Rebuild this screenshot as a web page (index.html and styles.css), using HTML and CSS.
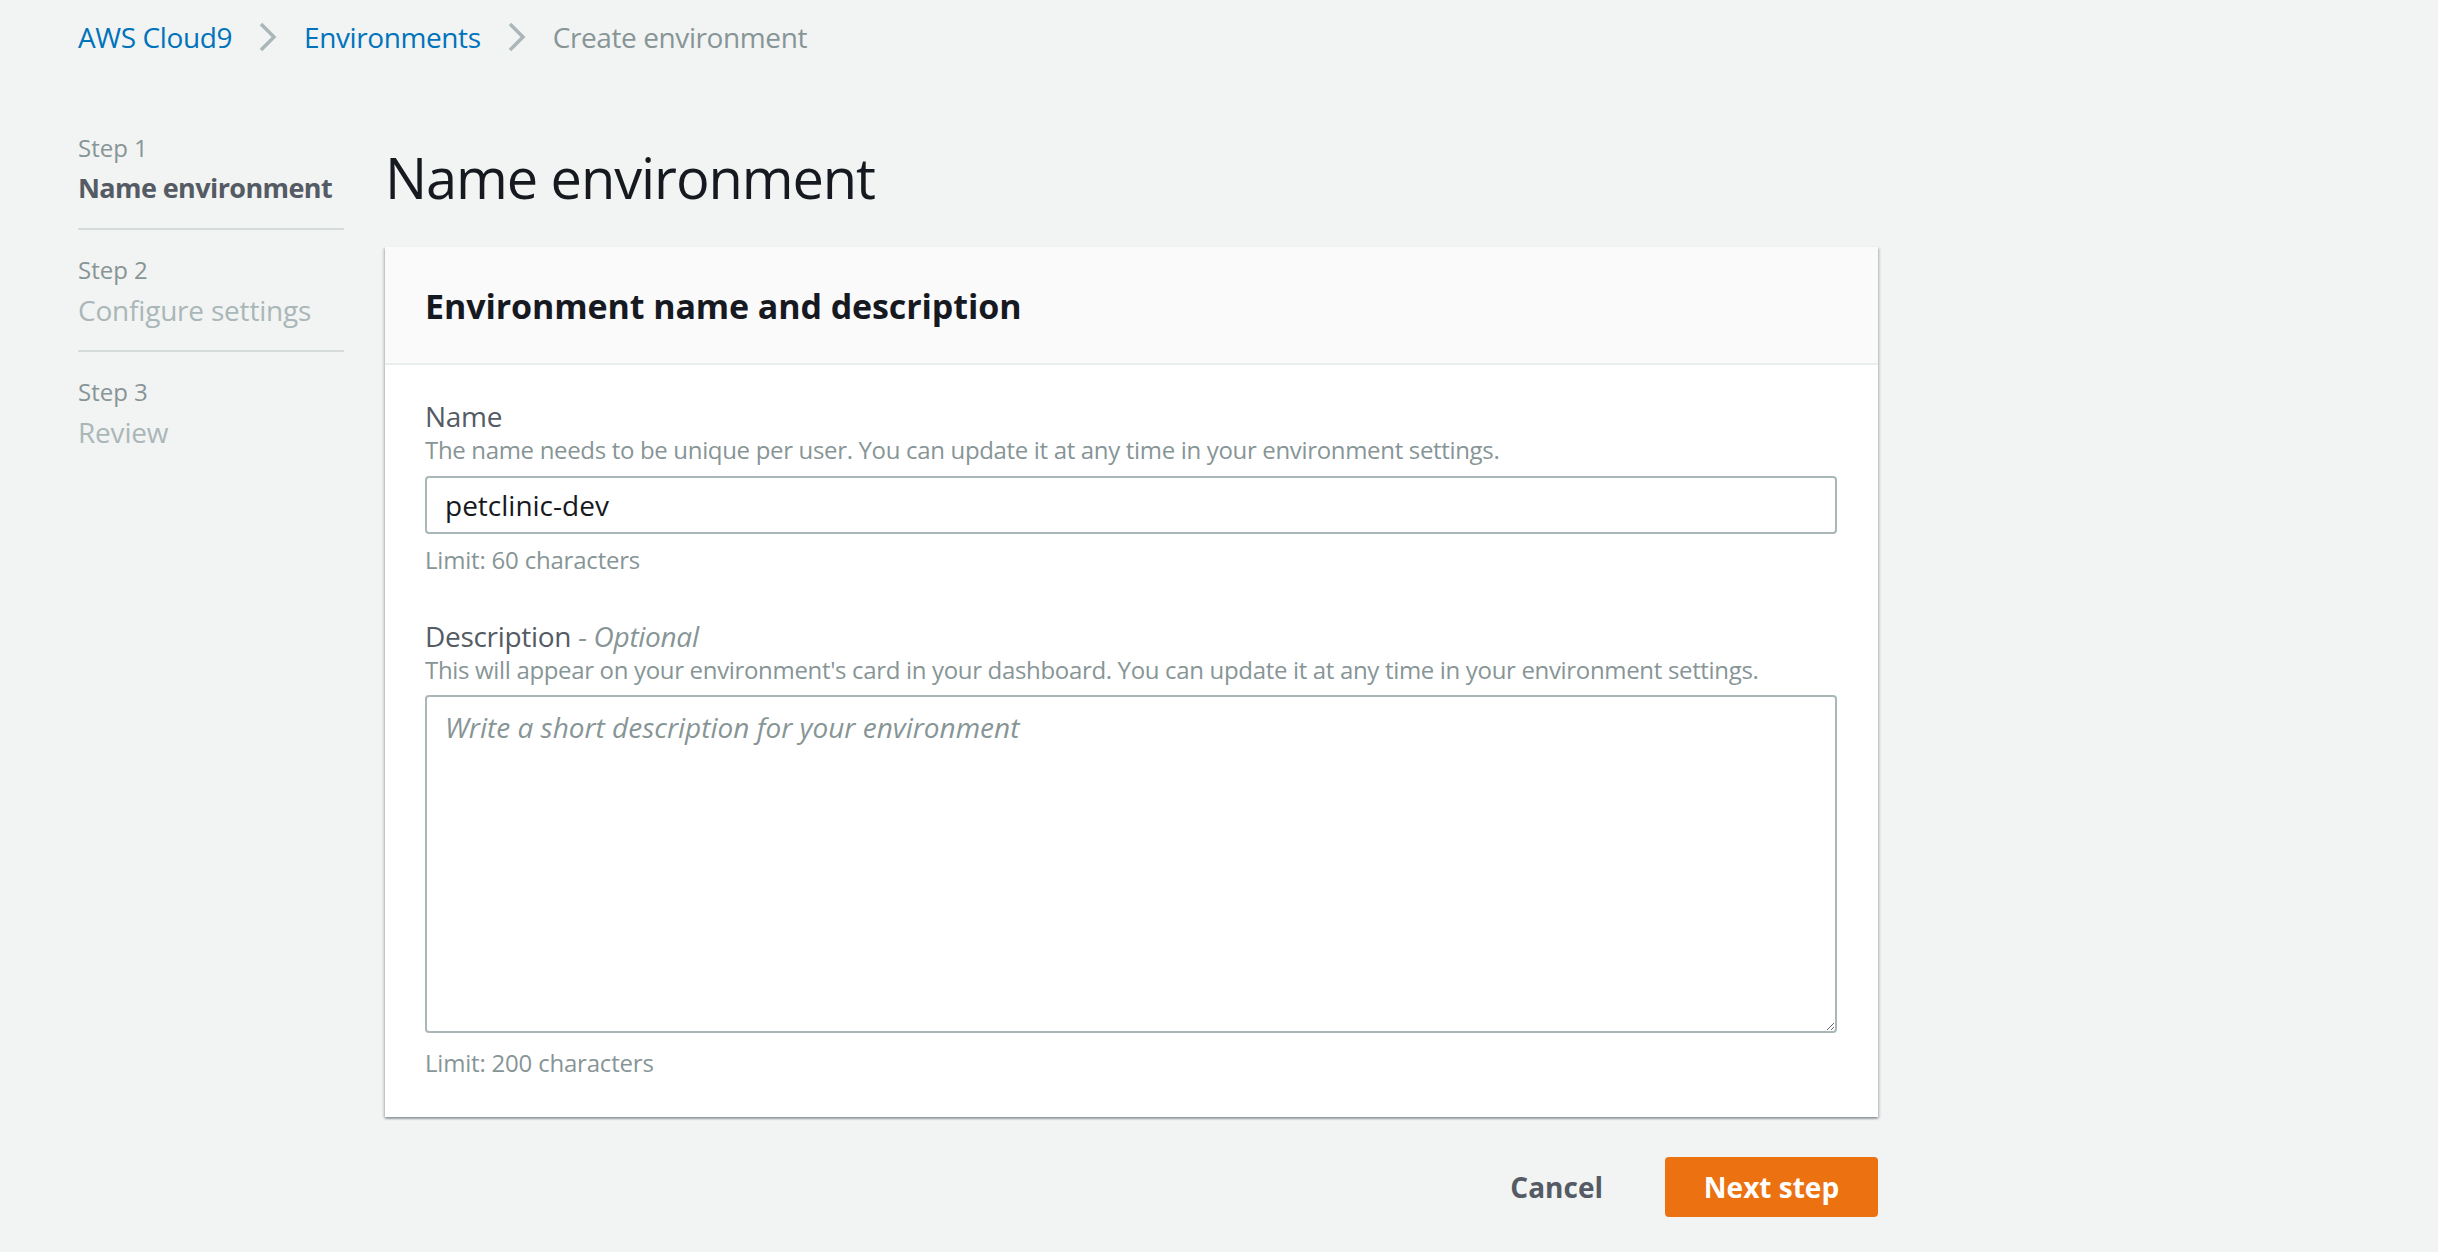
FILE: index.html
```html
<!DOCTYPE html>
<html lang="en">
<head>
<meta charset="utf-8">
<title>Create environment</title>
<link rel="stylesheet" href="styles.css">
</head>
<body>
<nav class="breadcrumbs">
  <a class="crumb link" href="#">AWS Cloud9</a>
  <svg class="chev" width="20" height="30" viewBox="0 0 20 30"><path d="M3 2 L16 15 L3 28" fill="none" stroke="#aab7b8" stroke-width="3.5"/></svg>
  <a class="crumb link" href="#">Environments</a>
  <svg class="chev" width="20" height="30" viewBox="0 0 20 30"><path d="M3 2 L16 15 L3 28" fill="none" stroke="#aab7b8" stroke-width="3.5"/></svg>
  <span class="crumb current">Create environment</span>
</nav>
<div class="layout">
  <aside class="steps">
    <div class="step">
      <div class="step-num">Step 1</div>
      <div class="step-title active">Name environment</div>
    </div>
    <div class="step">
      <div class="step-num">Step 2</div>
      <div class="step-title">Configure settings</div>
    </div>
    <div class="step last">
      <div class="step-num">Step 3</div>
      <div class="step-title">Review</div>
    </div>
  </aside>
  <main class="content">
    <h1 class="page-title">Name environment</h1>
    <section class="card">
      <header class="card-header">
        <h2 class="card-title">Environment name and description</h2>
      </header>
      <div class="card-body">
        <div class="field">
          <label class="label">Name</label>
          <div class="hint">The name needs to be unique per user. You can update it at any time in your environment settings.</div>
          <input class="input" type="text" value="petclinic-dev">
          <div class="limit">Limit: 60 characters</div>
        </div>
        <div class="field second">
          <label class="label">Description <span class="optional">- Optional</span></label>
          <div class="hint">This will appear on your environment's card in your dashboard. You can update it at any time in your environment settings.</div>
          <textarea class="textarea" placeholder="Write a short description for your environment"></textarea>
          <div class="limit">Limit: 200 characters</div>
        </div>
      </div>
    </section>
    <div class="actions">
      <button class="btn-cancel">Cancel</button>
      <button class="btn-primary">Next step</button>
    </div>
  </main>
</div>
</body>
</html>
```
FILE: styles.css
```css
* { box-sizing: border-box; }
html, body { margin: 0; padding: 0; }
body {
  background: #f2f3f3;
  font-family: "Open Sans", "Noto Sans", sans-serif;
  color: #16191f;
  width: 2438px;
  height: 1252px;
  overflow: hidden;
}
.breadcrumbs {
  display: flex;
  align-items: center;
  height: 74px;
  padding-left: 78px;
}
.crumb {
  font-size: 28px;
  line-height: 74px;
  letter-spacing: -0.4px;
  text-decoration: none;
  white-space: nowrap;
}
.link { color: #0073bb; }
.current { color: #879596; }
.chev { margin: 0 26px 0 26px; }

.layout {
  display: flex;
  padding-left: 78px;
  padding-top: 34px;
}
.steps {
  width: 266px;
  flex: none;
}
.step {
  padding: 20px 0 20px;
  border-bottom: 2px solid #d5dbdb;
}
.step.last { border-bottom: none; }
.step-num {
  font-size: 24px;
  line-height: 40px;
  color: #879596;
}
.step-title {
  font-size: 28px;
  line-height: 40px;
  color: #aab7b8;
  white-space: nowrap;
  letter-spacing: -0.2px;
}
.step-title.active {
  color: #545b64;
  font-weight: 700;
  font-size: 27px;
  letter-spacing: -0.6px;
}
.content {
  margin-left: 41px;
  width: 1493px;
  flex: none;
}
.page-title {
  margin: 34px 0 35px;
  font-size: 56px;
  line-height: 70px;
  font-weight: 400;
  letter-spacing: -1.1px;
  color: #16191f;
}
.card {
  background: #ffffff;
  box-shadow: 0 2px 2px 0 rgba(0,28,36,.3), 2px 1px 2px 0 rgba(0,28,36,.12), -2px 1px 2px 0 rgba(0,28,36,.12);
}
.card-header {
  background: #fafafa;
  padding: 37px 40px 35px;
  border-bottom: 2px solid #eaeded;
}
.card-title {
  margin: 0;
  font-size: 34px;
  line-height: 44px;
  font-weight: 700;
  letter-spacing: -0.1px;
  color: #16191f;
}
.card-body {
  padding: 34px 40px 39px;
}
.label {
  display: block;
  font-size: 28px;
  line-height: 34px;
  letter-spacing: -0.3px;
  color: #545b64;
}
.optional {
  font-style: italic;
  color: #879596;
}
.hint {
  margin-top: 2px;
  font-size: 24px;
  line-height: 30px;
  letter-spacing: -0.33px;
  color: #879596;
}
.input {
  display: block;
  margin-top: 11px;
  width: 1412px;
  height: 58px;
  border: 2px solid #aab7b8;
  border-radius: 4px;
  padding: 0 18px;
  font-family: inherit;
  font-size: 28px;
  color: #16191f;
  background: #fff;
  outline: none;
}
.limit {
  margin-top: 11px;
  font-size: 24px;
  line-height: 30px;
  letter-spacing: -0.2px;
  color: #879596;
}
.field.second { margin-top: 44px; }
.field.second .limit { margin-top: 15px; }
.textarea {
  display: block;
  margin-top: 10px;
  width: 1412px;
  height: 338px;
  border: 2px solid #aab7b8;
  border-radius: 4px;
  padding: 12px 18px;
  font-family: inherit;
  font-size: 28px;
  line-height: 36px;
  color: #16191f;
  background: #fff;
  resize: vertical;
  outline: none;
}
.textarea::placeholder {
  color: #879596;
  font-style: italic;
}
.actions {
  display: flex;
  justify-content: flex-end;
  align-items: center;
  margin-top: 40px;
  gap: 22px;
}
.btn-cancel {
  background: none;
  border: none;
  padding: 0 40px;
  height: 60px;
  font-family: inherit;
  font-size: 28px;
  font-weight: 700;
  color: #545b64;
}
.btn-primary {
  background: #ec7211;
  border: none;
  border-radius: 4px;
  height: 60px;
  width: 213px;
  padding: 0;
  font-family: inherit;
  font-size: 28px;
  font-weight: 700;
  color: #ffffff;
}
```
